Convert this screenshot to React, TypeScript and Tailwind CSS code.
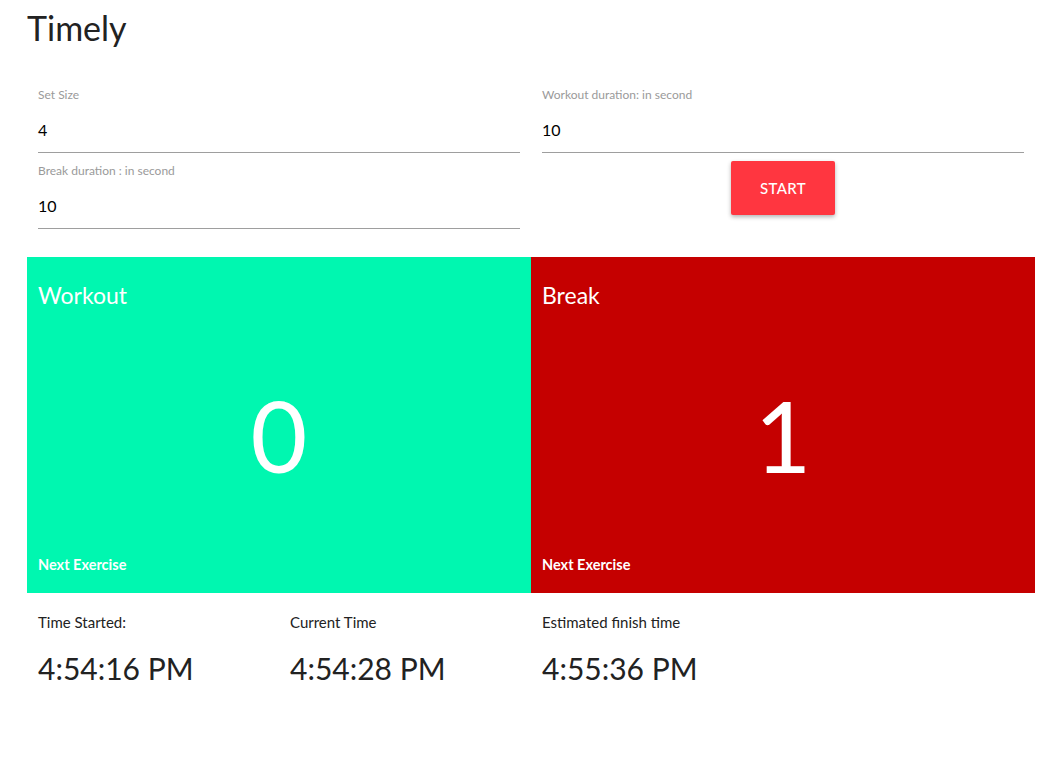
import React from "react";

function Field({ label, value }: { label: string; value: string }) {
  return (
    <div className="flex flex-col pt-[11px]">
      <label className="text-[12px] leading-[14px] text-[#9a9a9a]">{label}</label>
      <div className="mt-[18px] text-[16px] leading-[20px] text-black pb-[12px] border-b border-[#9e9e9e]">
        {value}
      </div>
    </div>
  );
}

function Panel({ title, count, color }: { title: string; count: string; color: string }) {
  return (
    <div className={`flex-1 h-[336px] flex flex-col px-[11px] text-white ${color}`}>
      <div className="pt-[25px] text-[23px] leading-[26px]">{title}</div>
      <div className="flex-1 flex items-center justify-center text-[98px] leading-none pt-[6px]">{count}</div>
      <div className="pb-[19px] text-[14.5px] leading-[18px] font-bold">Next Exercise</div>
    </div>
  );
}

function Stat({ label, value }: { label: string; value: string }) {
  return (
    <div className="w-[252px] px-[11px] flex flex-col">
      <div className="text-[15px] leading-[18px] text-[#222]">{label}</div>
      <div className="mt-[19px] text-[30px] leading-[36px] text-[#222]">{value}</div>
    </div>
  );
}

export default function App() {
  return (
    <div className="min-h-[764px] bg-white px-[27px] pt-[8px]" style={{ fontFamily: "Lato, 'Noto Sans', sans-serif" }}>
      <h1 className="text-[34px] leading-[40px] text-[#222] font-normal">Timely</h1>

      <div className="w-[1008px] mt-[29px] grid grid-cols-2">
        <div className="px-[11px] flex flex-col">
          <Field label="Set Size" value="4" />
          <Field label="Break duration : in second" value="10" />
        </div>
        <div className="px-[11px] flex flex-col">
          <Field label="Workout duration: in second" value="10" />
          <div className="flex justify-center mt-[8px]">
            <button className="w-[104px] h-[54px] bg-[#ff3640] text-white text-[15px] font-medium tracking-wide rounded-[2px] shadow-[0_2px_4px_rgba(0,0,0,0.3)]">
              START
            </button>
          </div>
        </div>
      </div>

      <div className="w-[1008px] mt-[28px] flex">
        <Panel title="Workout" count="0" color="bg-[#00f7b0]" />
        <Panel title="Break" count="1" color="bg-[#c50000]" />
      </div>

      <div className="w-[1008px] mt-[20px] flex">
        <Stat label="Time Started:" value="4:54:16 PM" />
        <Stat label="Current Time" value="4:54:28 PM" />
        <Stat label="Estimated finish time" value="4:55:36 PM" />
      </div>
    </div>
  );
}
